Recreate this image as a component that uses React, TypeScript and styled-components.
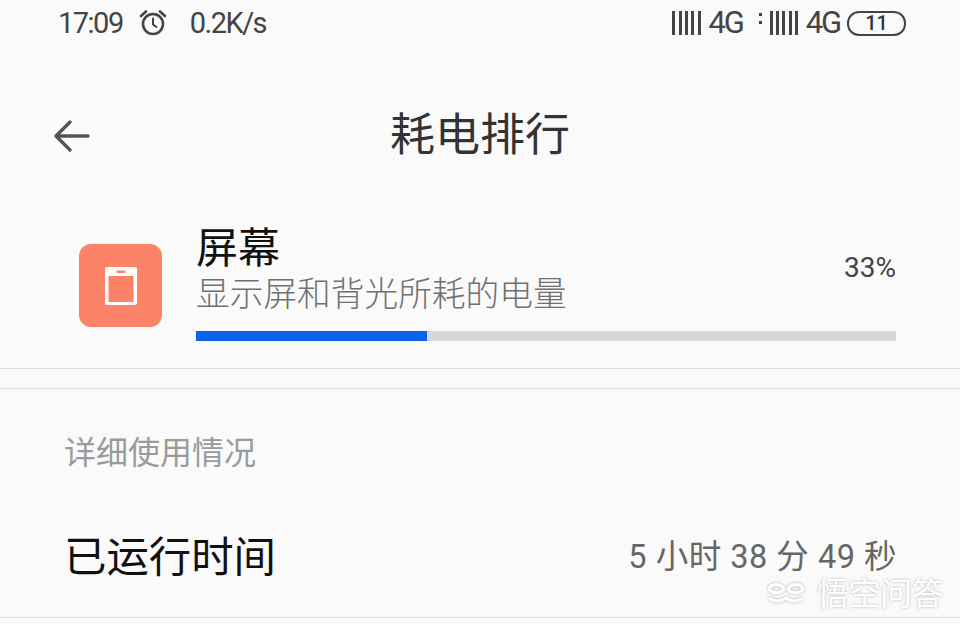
import React from "react";
import styled, { createGlobalStyle } from "styled-components";

const Global = createGlobalStyle`
  html, body { margin: 0; padding: 0; background: #fafafa; }
  body { font-family: "Noto Sans CJK SC", "Roboto", sans-serif; overflow: hidden; }
`;

const Page = styled.div`
  position: relative;
  width: 960px;
  height: 624px;
  overflow: hidden;
  background: #fafafa;
`;

const StatusBar = styled.div`
  height: 46px;
  padding: 0 54px 0 58px;
  display: flex;
  align-items: center;
  justify-content: space-between;
  color: #444;
  font-family: "Roboto", sans-serif;
  font-weight: 300;
`;

const StatusGroup = styled.div`
  display: flex;
  align-items: center;
`;

const StatusText = styled.span<{ $gap?: number }>`
  font-size: 29px;
  line-height: 46px;
  letter-spacing: -1.5px;
  margin-left: ${(p) => p.$gap ?? 0}px;
  font-weight: 400;
`;

const SignalText = styled.span`
  font-size: 31px;
  line-height: 46px;
  letter-spacing: -2.2px;
  font-weight: 400;
  margin-left: 8px;
`;

const SignalBars = styled.span`
  display: flex;
  gap: 3.3px;
  height: 24px;
`;

const SignalBar = styled.i`
  display: block;
  width: 3px;
  height: 24px;
  background: #444;
`;

const Dual = styled.span`
  display: flex;
  flex-direction: column;
  gap: 5px;
  margin: 0 8px 10px 16px;
`;

const Dot = styled.i`
  display: block;
  width: 3px;
  height: 3px;
  background: #444;
`;

const Battery = styled.span`
  width: 55px;
  height: 21px;
  margin-left: 7px;
  border: 2.5px solid #444;
  border-radius: 12px;
  display: flex;
  align-items: center;
  justify-content: center;
  font-size: 20px;
  font-weight: 500;
  color: #333;
`;

const Nav = styled.div`
  height: 172px;
  display: grid;
  grid-template-columns: 1fr auto 1fr;
  align-items: start;
`;

const Back = styled.svg`
  margin: 72px 0 0 52px;
  width: 40px;
  height: 36px;
`;

const Title = styled.div`
  font-size: 45px;
  line-height: 60px;
  margin-top: 56px;
  color: #333;
`;

const UsageRow = styled.div`
  display: flex;
  align-items: flex-start;
  padding: 0 64px 0 79px;
  height: 150px;
`;

const AppIcon = styled.div`
  width: 83px;
  height: 83px;
  margin-top: 26px;
  flex: none;
  border-radius: 12px;
  background: #fc8367;
  display: flex;
  align-items: center;
  justify-content: center;
`;

const UsageBody = styled.div`
  margin-left: 34px;
  flex: 1;
  min-width: 0;
`;

const UsageHead = styled.div`
  display: flex;
  justify-content: space-between;
  align-items: flex-end;
`;

const UsageName = styled.div`
  font-size: 42px;
  line-height: 53px;
  color: #111;
`;

const UsageDesc = styled.div`
  font-size: 33.7px;
  line-height: 42px;
  color: #707070;
  font-weight: 300;
`;

const Percent = styled.div`
  font-family: "Roboto", sans-serif;
  font-size: 28px;
  line-height: 42px;
  color: #444;
  margin-bottom: 24px;
`;

const Track = styled.div`
  height: 10px;
  margin-top: 18px;
  background: #d9d7db;
`;

const Fill = styled.div`
  height: 100%;
  background: #0b64e8;
`;

const Rule = styled.div<{ $mt?: number }>`
  height: 1px;
  background: #dedede;
  margin-top: ${(p) => p.$mt ?? 0}px;
`;

const SectionTitle = styled.div`
  padding: 39px 64px 0;
  font-size: 32px;
  line-height: 44px;
  color: #9b9b9b;
`;

const InfoRow = styled.div`
  display: flex;
  justify-content: space-between;
  align-items: center;
  padding: 0 63px 0 64px;
  height: 76px;
  margin-top: 44px;
`;

const InfoLabel = styled.div`
  font-size: 42.4px;
  line-height: 60px;
  color: #111;
`;

const InfoValue = styled.div`
  font-size: 32.5px;
  line-height: 36px;
  margin-top: 6px;
  color: #666;
  letter-spacing: 0.5px;
  font-family: "Roboto", "Noto Sans CJK SC", sans-serif;
`;

const Watermark = styled.div`
  position: absolute;
  right: 17px;
  bottom: 18px;
  display: flex;
  align-items: center;
  gap: 10px;
  color: #fff;
  font-size: 32px;
  line-height: 30px;
  letter-spacing: -0.5px;
  text-shadow: 0 0 3px rgba(0, 0, 0, 0.28);
`;

const Mark = styled.svg`
  width: 42px;
  height: 24px;
  filter: drop-shadow(0 0 1.5px rgba(0, 0, 0, 0.3));
`;

const bars = [0, 1, 2, 3, 4];

const Signal = () => (
  <SignalBars>
    {bars.map((b) => (
      <SignalBar key={b} />
    ))}
  </SignalBars>
);

export default function App() {
  return (
    <Page>
      <Global />
      <StatusBar>
        <StatusGroup>
          <StatusText>17:09</StatusText>
          <svg width="30" height="30" viewBox="0 0 30 30" fill="none" stroke="#444" strokeWidth="2.6" strokeLinecap="round" style={{ marginLeft: 15 }}>
            <circle cx="15" cy="16" r="10" />
            <path d="M15 10.5V16.5L18.5 19" strokeWidth="2" />
            <path d="M3 8 8 3.5M27 8 22 3.5" />
          </svg>
          <StatusText $gap={22}>0.2K/s</StatusText>
        </StatusGroup>
        <StatusGroup>
          <Signal />
          <SignalText>4G</SignalText>
          <Dual>
            <Dot />
            <Dot />
          </Dual>
          <Signal />
          <SignalText>4G</SignalText>
          <Battery>11</Battery>
        </StatusGroup>
      </StatusBar>
      <Nav>
        <Back viewBox="0 0 40 36" fill="none" stroke="#555" strokeWidth="3.4" strokeLinecap="round" strokeLinejoin="round">
          <path d="M36 18H4M18 4 4 18 18 32" />
        </Back>
        <Title>耗电排行</Title>
      </Nav>
      <UsageRow>
        <AppIcon>
          <svg width="32" height="38" viewBox="0 0 32 38">
            <rect x="0" y="0" width="32" height="38" rx="2" fill="#fff" />
            <rect x="3.5" y="9" width="25" height="26" fill="#fc8367" />
            <rect x="11.5" y="3.5" width="9" height="2.5" rx="1.2" fill="#fc8367" />
          </svg>
        </AppIcon>
        <UsageBody>
          <UsageHead>
            <div>
              <UsageName>屏幕</UsageName>
              <UsageDesc>显示屏和背光所耗的电量</UsageDesc>
            </div>
            <Percent>33%</Percent>
          </UsageHead>
          <Track>
            <Fill style={{ width: "33%" }} />
          </Track>
        </UsageBody>
      </UsageRow>
      <Rule />
      <Rule $mt={19} />
      <SectionTitle>详细使用情况</SectionTitle>
      <InfoRow>
        <InfoLabel>已运行时间</InfoLabel>
        <InfoValue>5 小时 38 分 49 秒</InfoValue>
      </InfoRow>
      <Rule $mt={25} />
      <Watermark>
        <Mark viewBox="0 0 40 24" fill="none" stroke="#fff" strokeWidth="3" strokeLinecap="round">
          <path d="M3 10C6 4 14 4 18 10C14 15 7 15 3 10ZM22 10C26 4 34 4 37 10C33 15 26 15 22 10Z" />
          <path d="M4 20C10 23 16 22 20 19C24 22 30 23 36 20" />
        </Mark>
        <span>悟空问答</span>
      </Watermark>
    </Page>
  );
}
